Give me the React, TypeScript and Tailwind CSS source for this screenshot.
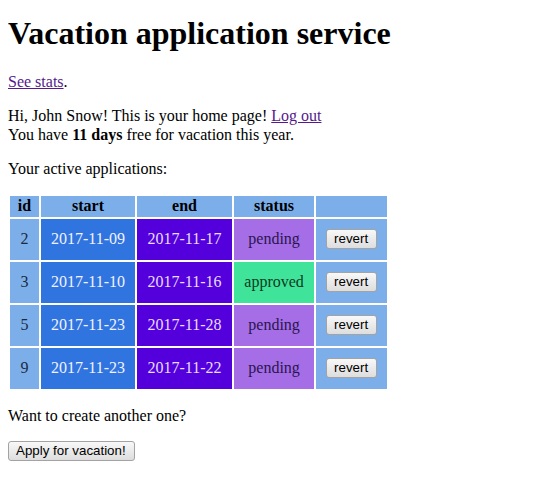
const applications = [
  { id: 2, start: "2017-11-09", end: "2017-11-17", status: "pending" },
  { id: 3, start: "2017-11-10", end: "2017-11-16", status: "approved" },
  { id: 5, start: "2017-11-23", end: "2017-11-28", status: "pending" },
  { id: 9, start: "2017-11-23", end: "2017-11-22", status: "pending" },
];

function OldButton({ children }: { children: string }) {
  return (
    <button className="rounded-[3px] border border-[#a3a3a3] bg-gradient-to-b from-[#f8f8f8] to-[#dddddd] pl-[7px] pr-[8px] py-[1px] font-['Liberation_Sans',Arial,sans-serif] text-[13.33px] leading-[16px] text-black">
      {children}
    </button>
  );
}

export default function App() {
  return (
    <div className="px-[8px] pb-[8px] font-['Liberation_Serif','Times_New_Roman',serif] text-[16px] leading-[18.4px] text-black">
      <h1 className="mb-[21px] mt-[15px] text-[32px] font-bold leading-[36.8px]">Vacation application service</h1>

      <p className="my-[16px]">
        <a href="#" className="text-[#551a8b] underline">See stats</a>.
      </p>

      <p className="my-[16px]">
        Hi, John Snow! This is your home page!{" "}
        <a href="#" className="text-[#551a8b] underline">Log out</a>
        <br />
        You have <b>11 days</b> free for vacation this year.
      </p>

      <p className="my-[16px]">Your active applications:</p>

      <table className="border-separate border-spacing-[2px] whitespace-nowrap">
        <thead>
          <tr className="bg-[#7cafea]">
            <th className="w-[29px] px-[1px] py-[1px]">id</th>
            <th className="w-[94px] px-[1px] py-[1px]">start</th>
            <th className="w-[95px] px-[1px] py-[1px]">end</th>
            <th className="w-[80px] px-[1px] py-[1px]">status</th>
            <th className="w-[71px] px-[1px] py-[1px]"></th>
          </tr>
        </thead>
        <tbody>
          {applications.map((a) => (
            <tr key={a.id} className="h-[41px] text-center">
              <td className="bg-[#7cafea] px-[10px] text-[#1c2a40]">{a.id}</td>
              <td className="bg-[#2f74df] px-[10px] text-[#f2f2ff]">{a.start}</td>
              <td className="bg-[#5400dc] px-[10px] text-[#e8ddff]">{a.end}</td>
              {a.status === "approved" ? (
                <td className="bg-[#3fe49a] px-[10px] text-[#0b3b1e]">{a.status}</td>
              ) : (
                <td className="bg-[#a56ee6] px-[10px] text-[#2a1550]">{a.status}</td>
              )}
              <td className="bg-[#7cafea] px-[10px]">
                <OldButton>revert</OldButton>
              </td>
            </tr>
          ))}
        </tbody>
      </table>

      <p className="my-[16px]">Want to create another one?</p>

      <OldButton>Apply for vacation!</OldButton>
    </div>
  );
}
